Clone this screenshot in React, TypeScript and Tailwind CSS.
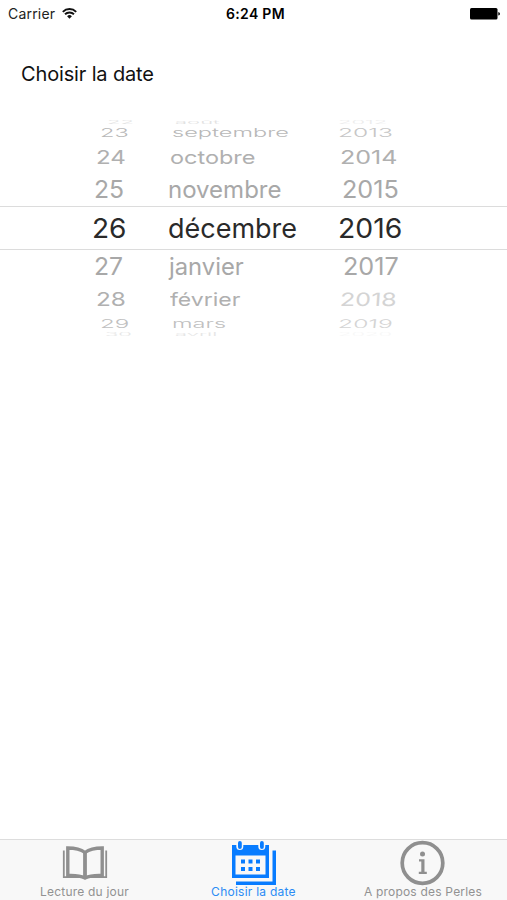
import React from 'react';

type Cell = { text: string; className: string };
type Row = { className: string; cells: [Cell, Cell, Cell] };

const rows: Row[] = [
  {
    className: 'h-[9px] text-[22px] font-light text-[#e2e2e2]',
    cells: [
      { text: '22', className: 'ml-[107px] scale-y-[0.2]' },
      { text: 'août', className: 'ml-[14px] scale-y-[0.2]' },
      { text: '2012', className: 'ml-[7px] scale-y-[0.2] text-[#ececec]' },
    ],
  },
  {
    className: 'h-[14px] text-[22px] font-light text-[#b8b8b8]',
    cells: [
      { text: '23', className: 'ml-[100px] scale-x-[1.07] scale-y-[0.54]' },
      { text: 'septembre', className: 'ml-[11px] scale-x-[1.07] scale-y-[0.54]' },
      { text: '2013', className: 'ml-[7px] scale-x-[1.12] scale-y-[0.54] text-[#c6c6c6]' },
    ],
  },
  {
    className: 'h-[34px] text-[23px] text-[#b0b0b0]',
    cells: [
      { text: '24', className: 'ml-[96px] scale-x-[1.05] scale-y-[0.8]' },
      { text: 'octobre', className: 'ml-[9px] scale-x-[1.02] scale-y-[0.8]' },
      { text: '2014', className: 'ml-[9px] scale-x-[1.09] scale-y-[0.8]' },
    ],
  },
  {
    className: 'h-[32px] text-[24px] text-[#a8a8a8]',
    cells: [
      { text: '25', className: 'ml-[94px] scale-x-[1.03]' },
      { text: 'novembre', className: 'ml-[7px]' },
      { text: '2015', className: 'ml-[11px] scale-x-[1.05]' },
    ],
  },
  {
    className: 'h-[44px] border-y border-[#dcdcdc] text-[27px] text-[#2a2a2a]',
    cells: [
      { text: '26', className: 'ml-[92px] scale-x-[1.04]' },
      { text: 'décembre', className: 'ml-[7px]' },
      { text: '2016', className: 'ml-[7px] scale-x-[1.05]' },
    ],
  },
  {
    className: 'h-[34px] text-[24px] text-[#a8a8a8]',
    cells: [
      { text: '27', className: 'ml-[94px] scale-x-[1.03]' },
      { text: 'janvier', className: 'ml-[8px] scale-x-[0.99]' },
      { text: '2017', className: 'ml-[12px] scale-x-[1.05]' },
    ],
  },
  {
    className: 'h-[32px] text-[23px] text-[#b0b0b0]',
    cells: [
      { text: '28', className: 'ml-[96px] scale-x-[1.06] scale-y-[0.8]' },
      { text: 'février', className: 'ml-[9px] scale-y-[0.8]' },
      { text: '2018', className: 'ml-[9px] scale-x-[1.09] scale-y-[0.8] -skew-x-3 text-[#d4d4d4]' },
    ],
  },
  {
    className: 'h-[15px] text-[22px] font-light text-[#c0c0c0]',
    cells: [
      { text: '29', className: 'ml-[100px] scale-x-[1.1] scale-y-[0.54]' },
      { text: 'mars', className: 'ml-[11px] scale-x-[1.07] scale-y-[0.54]' },
      { text: '2019', className: 'ml-[7px] scale-x-[1.12] scale-y-[0.54] -skew-x-3 text-[#d4d4d4]' },
    ],
  },
  {
    className: 'h-[6px] text-[22px] font-light text-[#e6e6e6]',
    cells: [
      { text: '30', className: 'ml-[105px] scale-y-[0.2]' },
      { text: 'avril', className: 'ml-[14px] scale-y-[0.2]' },
      { text: '2020', className: 'ml-[7px] scale-y-[0.2] text-[#f7f7f7]' },
    ],
  },
];

const StatusBar: React.FC = () => (
  <header className="grid h-[27px] grid-cols-3 items-center pl-2 pr-[7px] text-[14px] text-[#222222]">
    <div className="flex items-center gap-[7px]">
      <span className="tracking-[0.2px]">Carrier</span>
      <svg className="h-[11px] w-[15px]" viewBox="0 0 15 11" fill="none" stroke="#111" strokeWidth="1.9">
        <path d="M.8 3.8a9.5 9.5 0 0 1 13.4 0M3 6.3a6.4 6.4 0 0 1 9 0" />
        <path d="M7.5 10.7 5.1 8.3a3.4 3.4 0 0 1 4.8 0Z" fill="#111" stroke="none" />
      </svg>
    </div>
    <span className="ml-[3px] whitespace-nowrap text-center font-semibold tracking-[0.3px] text-black">6:24 PM</span>
    <svg className="h-3 w-[30px] justify-self-end" viewBox="0 0 30 12">
      <rect x="0" y="0" width="27.5" height="11.5" rx="1.5" fill="#000" />
      <path d="M28.3 4q1.7.4 1.7 1.8t-1.7 1.8Z" fill="#000" />
    </svg>
  </header>
);

const DatePicker: React.FC = () => (
  <div className="mt-[28px] leading-none">
    {rows.map((row) => (
      <div
        key={row.cells[0].text}
        className={`grid grid-cols-[161px_170px_1fr] grid-rows-[100%] items-center ${row.className}`}
      >
        {row.cells.map((cell) => (
          <span key={cell.text} className={`origin-left justify-self-start whitespace-nowrap ${cell.className}`}>
            {cell.text}
          </span>
        ))}
      </div>
    ))}
  </div>
);

const BookIcon: React.FC = () => (
  <svg className="h-[46px] w-[46px]" viewBox="0 0 46 46" fill="none" stroke="#8f8f8f">
    <path d="M5.8 8Q17 8 23 12.5q6-4.5 17.2-4.5V35.500Q29 35 23 38 17 35 5.800 35.500Z" strokeWidth="3.400" />
    <path d="M23 11.500v27" strokeWidth="3.800" />
    <path d="M1.800 10.500v26.700H17M44.200 10.500v26.700H29" strokeWidth="1.800" />
  </svg>
);

const CalendarIcon: React.FC = () => (
  <svg className="h-[46px] w-[46px]" viewBox="0 0 46 46" fill="#087cff">
    <path d="M1 5h4.300v1.500a3.500 3.500 0 0 0 7 0V5h15v1.500a3.500 3.500 0 0 0 7 0V5H38v33H1ZM4.500 15.500v19h30v-19Z" fillRule="evenodd" />
    <rect x="7" y="1" width="3.800" height="8" rx="1.900" />
    <rect x="29" y="1" width="3.800" height="8" rx="1.900" />
    <path d="M41.500 10.500H45V45H5v-3.500h36.500Z" />
    <path d="M10 19.500h4v4h-4zM17.500 19.500h4v4h-4zM25 19.500h4v4h-4zM10 27h4v4h-4zM17.500 27h4v4h-4zM25 27h4v4h-4z" />
  </svg>
);

const InfoIcon: React.FC = () => (
  <svg className="h-[46px] w-[46px]" viewBox="0 0 46 46" fill="#8f8f8f">
    <circle cx="22.500" cy="23" r="20.300" fill="none" stroke="#8f8f8f" strokeWidth="3.700" />
    <circle cx="22.500" cy="14" r="2.500" />
    <path d="M19 19.300H24.500v12.400h2.300V34h-8v-2.300h2.500V21.600h-2.300Z" />
  </svg>
);

const tabs = [
  { label: 'Lecture du jour', icon: <BookIcon />, className: 'text-[#929292] tracking-[0.2px]' },
  { label: 'Choisir la date', icon: <CalendarIcon />, className: 'text-[#2b8cf5] tracking-[0.25px]' },
  { label: 'A propos des Perles', icon: <InfoIcon />, className: 'pl-px text-[#929292] tracking-[0.2px]' },
];

const App: React.FC = () => (
  <div className="flex h-[900px] w-[507px] flex-col overflow-hidden bg-white font-['Inter',sans-serif]">
    <StatusBar />
    <h1 className="ml-[21px] mt-8 text-[20px] leading-[30px] tracking-[-0.15px] text-[#111111]">Choisir la date</h1>
    <DatePicker />
    <nav className="mt-auto grid h-[61px] grid-cols-3 border-t border-[#dddddd] bg-[#f8f8f8]">
      {tabs.map((tab) => (
        <div key={tab.label} className={`flex flex-col items-center text-[12px] ${tab.className}`}>
          {tab.icon}
          <span className="whitespace-nowrap leading-[12px]">{tab.label}</span>
        </div>
      ))}
    </nav>
  </div>
);

export default App;
